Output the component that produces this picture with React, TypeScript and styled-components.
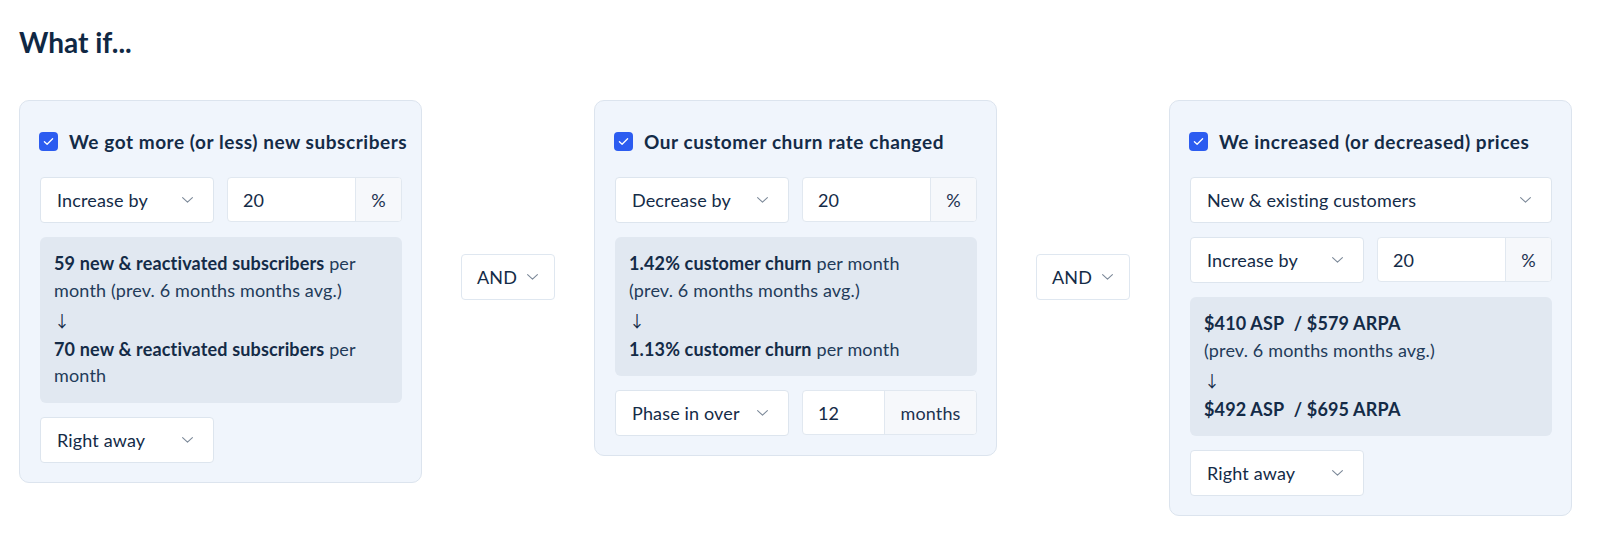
import React from "react"
import { createGlobalStyle, styled } from "styled-components"

const GlobalStyle = createGlobalStyle`
  * { box-sizing: border-box; }
  body {
    margin: 0;
    background: #ffffff;
    font-family: Lato, "Open Sans", sans-serif;
    color: #142b47;
  }
`

const Chevron: React.FC = () => (
  <ChevronIcon width="11" height="6" viewBox="0 0 11 6" fill="none">
    <path d="M0.6 0.6L5.5 5.2L10.4 0.6" stroke="#7b8898" strokeWidth="1.1" strokeLinecap="round" strokeLinejoin="round" />
  </ChevronIcon>
)

const CheckMark: React.FC = () => (
  <svg width="11" height="9" viewBox="0 0 11 9" fill="none">
    <path d="M1.4 4.7L4.1 7.3L9.6 1.8" stroke="#ffffff" strokeWidth="1.3" strokeLinecap="round" strokeLinejoin="round" />
  </svg>
)

interface SelectProps {
  label: string
  width?: string
}

const Select: React.FC<SelectProps> = ({ label, width }) => (
  <SelectBox $width={width}>
    <span>{label}</span>
    <Chevron />
  </SelectBox>
)

interface NumberFieldProps {
  value: string
  unit: string
  unitWidth: number
}

const NumberField: React.FC<NumberFieldProps> = ({ value, unit, unitWidth }) => (
  <InputGroup>
    <InputValue>{value}</InputValue>
    <Unit $width={unitWidth}>{unit}</Unit>
  </InputGroup>
)

const CardHeader: React.FC<{ title: string }> = ({ title }) => (
  <Header>
    <Checkbox>
      <CheckMark />
    </Checkbox>
    <HeaderTitle>{title}</HeaderTitle>
  </Header>
)

const App: React.FC = () => (
  <Page>
    <GlobalStyle />
    <Title>What if...</Title>
    <Scenarios>
      <Card>
        <CardHeader title="We got more (or less) new subscribers" />
        <FieldRow>
          <Select label="Increase by" />
          <NumberField value="20" unit="%" unitWidth={46} />
        </FieldRow>
        <InfoBox>
          <p>
            <b>59 new &amp; reactivated subscribers</b> per month (prev. 6 months months avg.)
          </p>
          <Arrow>↓</Arrow>
          <p>
            <b>70 new &amp; reactivated subscribers</b> per month
          </p>
        </InfoBox>
        <Select label="Right away" width="174px" />
      </Card>

      <Connector>
        <Select label="AND" />
      </Connector>

      <Card>
        <CardHeader title="Our customer churn rate changed" />
        <FieldRow>
          <Select label="Decrease by" />
          <NumberField value="20" unit="%" unitWidth={46} />
        </FieldRow>
        <InfoBox>
          <p>
            <b>1.42% customer churn</b> per month
            <br />
            (prev. 6 months months avg.)
          </p>
          <Arrow>↓</Arrow>
          <p>
            <b>1.13% customer churn</b> per month
          </p>
        </InfoBox>
        <FieldRow>
          <Select label="Phase in over" />
          <NumberField value="12" unit="months" unitWidth={92} />
        </FieldRow>
      </Card>

      <Connector>
        <Select label="AND" />
      </Connector>

      <Card>
        <CardHeader title="We increased (or decreased) prices" />
        <Select label="New & existing customers" />
        <FieldRow>
          <Select label="Increase by" />
          <NumberField value="20" unit="%" unitWidth={46} />
        </FieldRow>
        <InfoBox>
          <p>
            <b>$410 ASP</b>&nbsp; <b>/ $579 ARPA</b>
            <br />
            (prev. 6 months months avg.)
          </p>
          <Arrow>↓</Arrow>
          <p>
            <b>$492 ASP</b>&nbsp; <b>/ $695 ARPA</b>
          </p>
        </InfoBox>
        <Select label="Right away" width="174px" />
      </Card>
    </Scenarios>
  </Page>
)

const Page = styled.div`
  padding: 0 19px 20px;
`

const Title = styled.h1`
  margin: 0;
  padding-top: 25px;
  font-size: 28px;
  line-height: 34px;
  font-weight: 700;
  color: #0f2844;
`

const Scenarios = styled.div`
  display: flex;
  align-items: flex-start;
  gap: 39px;
  margin-top: 41px;
`

const Card = styled.section`
  width: 403px;
  flex: none;
  display: flex;
  flex-direction: column;
  gap: 14px;
  padding: 31px 19px 19px 20px;
  background: #f0f5fc;
  border: 1px solid #dce4ee;
  border-radius: 10px;
`

const Header = styled.div`
  display: flex;
  align-items: center;
  gap: 11px;
  height: 19px;
  margin-bottom: 12px;
  margin-left: -1px;
`

const Checkbox = styled.span`
  width: 19px;
  height: 19px;
  flex: none;
  display: flex;
  align-items: center;
  justify-content: center;
  border-radius: 4px;
  background: #2c5cf0;
`

const HeaderTitle = styled.h2`
  margin: 0;
  font-size: 19px;
  letter-spacing: 0.55px;
  font-weight: 700;
  color: #142b47;
  white-space: nowrap;
`

const FieldRow = styled.div`
  display: grid;
  grid-template-columns: 174px 1fr;
  gap: 13px;
`

const ChevronIcon = styled.svg`
  flex: none;
`

const SelectBox = styled.div<{ $width?: string }>`
  width: ${({ $width }) => $width ?? "auto"};
  height: 46px;
  display: flex;
  align-items: center;
  justify-content: space-between;
  gap: 10px;
  padding: 0 20px 0 16px;
  background: #ffffff;
  border: 1px solid #dde5ee;
  border-radius: 4px;
  font-size: 18px;
  letter-spacing: 0.15px;
  color: #142b47;
  white-space: nowrap;
`

const InputGroup = styled.div`
  height: 45px;
  display: flex;
  background: #ffffff;
  border: 1px solid #e1e8f0;
  border-radius: 4px;
  overflow: hidden;
`

const InputValue = styled.div`
  flex: 1;
  display: flex;
  align-items: center;
  padding-left: 15px;
  font-size: 18px;
  letter-spacing: 0.15px;
`

const Unit = styled.div<{ $width: number }>`
  width: ${({ $width }) => $width}px;
  flex: none;
  display: flex;
  align-items: center;
  justify-content: center;
  background: #f6f8fb;
  border-left: 1px solid #e1e8f0;
  font-size: 18px;
  letter-spacing: 0.15px;
  color: #1c3250;
`

const InfoBox = styled.div`
  padding: 13px 14px 14px;
  background: #e1e8f1;
  border-radius: 6px;
  font-size: 18px;
  letter-spacing: 0.15px;
  line-height: 26.5px;
  color: #233b59;

  p {
    margin: 0;
  }

  b {
    font-weight: 700;
    color: #142b47;
  }
`

const Arrow = styled.div`
  margin: 4px 0 2px;
  font-family: "Noto Sans CJK SC", "DejaVu Sans", sans-serif;
  font-size: 16px;
  color: #142b47;
`

const Connector = styled.div`
  width: 94px;
  flex: none;
  margin-top: 154px;

  & > div {
    padding: 0 20px 0 15px;
    border-color: #dfe7f0;
  }
`

export default App
